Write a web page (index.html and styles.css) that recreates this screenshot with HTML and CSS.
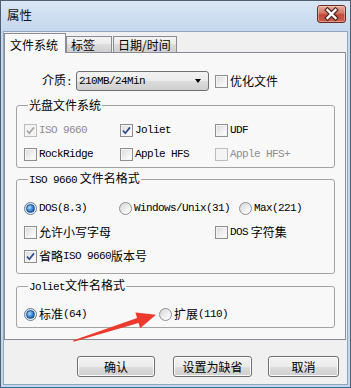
FILE: index.html
```html
<!DOCTYPE html>
<html lang="zh-CN">
<head>
    <meta charset="UTF-8">
    <meta name="viewport" content="width=device-width, initial-scale=1.0">
    <title>属性</title>
    <link rel="stylesheet" href="styles.css">
</head>
<body>
    <div class="window">
        <!-- Title bar -->
        <div class="titlebar">
            <span class="title">属性</span>
            <button class="close-btn" aria-label="关闭">
                <svg width="29" height="18" viewBox="0 0 29 18">
                    <path d="M10.5 5 L18.5 13 M18.5 5 L10.5 13" stroke="#4a231c" stroke-width="4.6" stroke-linecap="square"/>
                    <path d="M10.5 5 L18.5 13 M18.5 5 L10.5 13" stroke="#ffffff" stroke-width="2.4" stroke-linecap="square"/>
                </svg>
            </button>
        </div>

        <div class="client">
            <!-- Tabs -->
            <div class="tabs">
                <div class="tab tab-fs active">文件系统</div>
                <div class="tab tab-label">标签</div>
                <div class="tab tab-date">日期/时间</div>
            </div>

            <div class="panel">
                <div class="media-row">
                    <span class="media-label">介质<span class="en">:</span></span>
                    <div class="combo">
                        <span class="en">210MB/24Min</span>
                        <span class="combo-arrow"></span>
                    </div>
                    <label class="check"><span class="box"></span>优化文件</label>
                </div>

                <!-- 光盘文件系统 -->
                <fieldset class="group group-fs">
                    <legend>光盘文件系统</legend>
                    <div class="row">
                        <label class="check w96 disabled"><span class="box checked"><svg viewBox="0 0 11 11"><path d="M2 5.5 L4.3 8.2 L9 2.4"/></svg></span><span class="en">ISO 9660</span></label>
                        <label class="check w95"><span class="box checked"><svg viewBox="0 0 11 11"><path d="M2 5.5 L4.3 8.2 L9 2.4"/></svg></span><span class="en">Joliet</span></label>
                        <label class="check"><span class="box"></span><span class="en">UDF</span></label>
                    </div>
                    <div class="row">
                        <label class="check w96"><span class="box"></span><span class="en">RockRidge</span></label>
                        <label class="check w95"><span class="box"></span><span class="en">Apple HFS</span></label>
                        <label class="check disabled"><span class="box"></span><span class="en">Apple HFS+</span></label>
                    </div>
                </fieldset>

                <!-- ISO 9660 文件名格式 -->
                <fieldset class="group group-iso">
                    <legend><span class="en">ISO 9660</span> 文件名格式</legend>
                    <div class="row">
                        <label class="radio w95"><span class="dot checked"></span><span class="en">DOS(8.3)</span></label>
                        <label class="radio w120"><span class="dot"></span><span class="en">Windows/Unix(31)</span></label>
                        <label class="radio"><span class="dot"></span><span class="en">Max(221)</span></label>
                    </div>
                    <div class="row">
                        <label class="check w191"><span class="box"></span>允许小写字母</label>
                        <label class="check"><span class="box"></span><span class="en">DOS</span>&nbsp;字符集</label>
                    </div>
                    <div class="row">
                        <label class="check"><span class="box checked"><svg viewBox="0 0 11 11"><path d="M2 5.5 L4.3 8.2 L9 2.4"/></svg></span>省略<span class="en">ISO 9660</span>版本号</label>
                    </div>
                </fieldset>

                <!-- Joliet文件名格式 -->
                <fieldset class="group group-joliet">
                    <legend><span class="en">Joliet</span>文件名格式</legend>
                    <div class="row">
                        <label class="radio w135"><span class="dot checked"></span>标准<span class="en">(64)</span></label>
                        <label class="radio"><span class="dot"></span>扩展<span class="en">(110)</span></label>
                    </div>
                </fieldset>
            </div>

            <div class="buttons">
                <button class="btn btn-ok">确认</button>
                <button class="btn btn-default">设置为缺省</button>
                <button class="btn btn-cancel">取消</button>
            </div>
        </div>
    </div>

    <!-- red annotation arrow drawn over the dialog -->
    <svg class="annotation" width="351" height="388" viewBox="0 0 351 388">
        <polygon points="73,340.6 137.1,318 135.4,312.6 156,314.8 140.2,328.2 138.5,323 73.6,341.8" fill="#ec3b2e"/>
    </svg>
</body>
</html>
```

FILE: styles.css
```css
* {
    box-sizing: border-box;
}

html, body {
    margin: 0;
    padding: 0;
}

body {
    position: relative;
    width: 351px;
    height: 388px;
    overflow: hidden;
    font-family: "Noto Sans CJK SC", "Liberation Sans", sans-serif;
    font-size: 12px;
    line-height: 14px;
    color: #000;
    background-color: #f0f0f0;
}

.en {
    font-family: "Liberation Mono", "DejaVu Sans Mono", monospace;
    font-size: 11px;
    letter-spacing: -0.6px;
}

/* window frame */
.window {
    width: 351px;
    height: 388px;
    display: flex;
    flex-direction: column;
    padding: 0 2px 2px 2px;
    border: 1px solid #4f6073;
    border-bottom-color: #2c6f99;
    background: linear-gradient(#dae6f4, #c4d7ed 30px, #c2d6ec);
}

.titlebar {
    height: 30px;
    flex: none;
    display: flex;
    align-items: flex-start;
    justify-content: space-between;
    padding: 4px 2px 0 4px;
}

.title {
    margin-top: 3px;
    font-size: 12.5px;
    color: #111;
}

.close-btn {
    width: 29px;
    height: 18px;
    padding: 0;
    border: 1px solid #6e2a20;
    border-radius: 3px;
    background: linear-gradient(#e7a99b 0%, #d47565 45%, #c5473a 55%, #c9604e 100%);
    box-shadow: inset 0 0 0 1px rgba(255, 255, 255, 0.35);
}

.close-btn svg {
    display: block;
    margin: -1px;
}

.client {
    flex: 1;
    display: flex;
    flex-direction: column;
    border: 1px solid #90a6c0;
    background-color: #f0f0f0;
}

/* tabs */
.tabs {
    height: 20px;
    flex: none;
    display: flex;
    align-items: flex-end;
}

.tab {
    height: 16px;
    padding: 1px 0 0 4px;
    border: 1px solid #898c95;
    border-bottom: none;
    background: linear-gradient(#f3f3f3 0%, #ebebeb 50%, #dddddd 50%, #cfcfcf 100%);
    white-space: nowrap;
}

.tab.active {
    position: relative;
    z-index: 1;
    height: 20px;
    margin-bottom: -1px;
    padding: 4px 0 0 5px;
    background: #f8f8f8;
}

.tab-fs {
    width: 62px;
}

.tab-label {
    width: 46px;
}

.tab-date {
    width: 64px;
    margin-left: 1px;
}

.panel {
    margin-right: 1px;
    padding: 18px 10px 11px 11px;
    border: 1px solid #898c95;
    background-color: #f8f8f8;
}

/* 介质 row */
.media-row {
    height: 20px;
    display: flex;
    align-items: center;
    padding-left: 26px;
}

.media-label {
    width: 34px;
}

.combo {
    width: 133px;
    height: 20px;
    margin-right: 6px;
    display: flex;
    align-items: center;
    justify-content: space-between;
    padding: 0 7px 0 2px;
    border: 1px solid #707070;
    border-radius: 3px;
    background: linear-gradient(#f2f2f2 0%, #ebebeb 50%, #dddddd 50%, #cfcfcf 100%);
}

.combo-arrow {
    width: 0;
    height: 0;
    border-left: 3.5px solid transparent;
    border-right: 3.5px solid transparent;
    border-top: 4px solid #000;
}

/* group boxes */
.group {
    margin: 0;
    padding: 0 0 0 7px;
    border: 1px solid #a3a3a3;
    border-radius: 3px;
    min-inline-size: 0;
}

.group legend {
    margin-left: 4px;
    padding: 0 1px;
    line-height: 14px;
}

.group-fs {
    margin-top: 7px;
    padding-top: 8px;
    padding-bottom: 3px;
}

.group-iso {
    margin-top: 3px;
    padding-top: 11px;
    padding-bottom: 7px;
}

.group-joliet {
    margin-top: 4px;
    padding-top: 10px;
    padding-bottom: 3px;
}

.row {
    height: 20px;
    display: flex;
    align-items: center;
}

.row + .row {
    margin-top: 4px;
}

.w95 { width: 95px; }
.w96 { width: 96px; }
.w120 { width: 120px; }
.w135 { width: 135px; }
.w191 { width: 191px; }

/* checkboxes and radios */
.check,
.radio {
    display: flex;
    align-items: center;
    white-space: nowrap;
}

.box,
.dot {
    flex: none;
    width: 13px;
    height: 13px;
    margin-right: 2px;
    border: 1px solid #8f8f8f;
}

.box {
    background: linear-gradient(135deg, #d8d9db, #f6f6f6 70%, #ffffff);
    box-shadow: inset 0 0 0 1px #f4f4f4;
}

.box svg {
    display: block;
    width: 11px;
    height: 11px;
}

.box svg path {
    fill: none;
    stroke: #2c4b8e;
    stroke-width: 1.7;
}

.check.disabled {
    color: #8d8d8d;
}

.check.disabled .box {
    border-color: #bcbcbc;
    background: #f4f4f4;
}

.check.disabled .box svg path {
    stroke: #a6a6a6;
}

.dot {
    border-radius: 50%;
    background: linear-gradient(135deg, #d5d6d8, #f6f6f6 70%, #ffffff);
    display: flex;
    align-items: center;
    justify-content: center;
}

.dot.checked {
    border-color: #5f7d9c;
}

.dot.checked::after {
    content: "";
    width: 7px;
    height: 7px;
    border-radius: 50%;
    border: 1px solid #174a87;
    background: radial-gradient(circle at 35% 35%, #a8dcfb, #2a78c6 60%, #1a4f93);
}

/* bottom buttons */
.buttons {
    display: flex;
    justify-content: flex-end;
    margin-top: 16px;
    padding-right: 8px;
}

.btn {
    height: 21px;
    padding: 0;
    border: 1px solid #707070;
    border-radius: 3px;
    font-family: "Noto Sans CJK SC", sans-serif;
    font-size: 12px;
    color: #000;
    background: linear-gradient(#f2f2f2 0%, #ebebeb 50%, #dddddd 50%, #cfcfcf 100%);
    box-shadow: inset 0 0 0 1px #fcfcfc;
}

.btn-ok {
    width: 78px;
}

.btn-default {
    width: 79px;
    margin-left: 18px;
}

.btn-cancel {
    width: 71px;
    margin-left: 16px;
}

.annotation {
    position: absolute;
    left: 0;
    top: 0;
    pointer-events: none;
}
```
